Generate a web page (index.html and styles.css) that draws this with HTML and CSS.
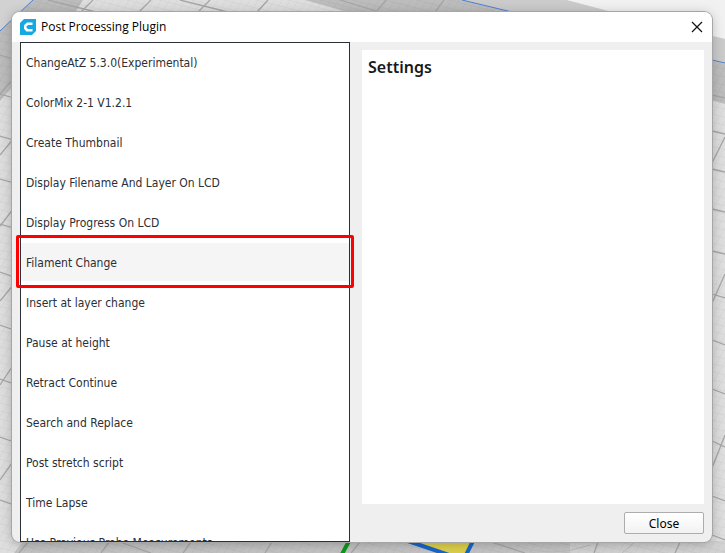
FILE: index.html
```html
<!DOCTYPE html>
<html lang="en">
  <head>
    <meta charset="UTF-8" />
    <meta name="viewport" content="width=device-width, initial-scale=1" />
    <title>Post Processing Plugin</title>
    <link rel="stylesheet" href="styles.css">
  </head>
  <body>
    <!-- Build plate behind the dialog -->
    <svg class="scene" viewBox="0 0 725 553" preserveAspectRatio="xMidYMid slice" aria-hidden="true">
      <defs>
        <pattern id="fine" width="7" height="7" patternUnits="userSpaceOnUse" patternTransform="matrix(1 .25 -.6 1 0 0)">
          <path d="M0 0H7M0 0V7" fill="none" stroke="#000" stroke-opacity=".05" />
        </pattern>
      </defs>
      <path fill="#dedede" d="M0 0H725V553H0z" />
      <path fill="#d2d2d2" d="M0 0H33L0 31z" />
      <path fill="#bcbcbc" d="M33 0H83L68 24 0 101V31z" />
      <path fill="#bdbdbd" d="M305 0H462L512 12H725V104L600 70 354 14z" />
      <path fill="#cbcbcb" d="M462 0H567L725 39V64L512 12z" />
      <path fill="#f1f1f1" d="M567 0H725V39L612 12z" />
      <path fill="#c4c4c4" d="M24 541H725V553H14z" />
      <path fill="#d2d2d2" d="M570 541H725V553H570z" />
      <path fill="url(#fine)" d="M33 0H462L725 64V553H0V31z" />
      <g fill="none" stroke="#a6a6a6" stroke-width="1.3">
        <path d="M48 0L96 12M180 0L228 12M340 0L376 11M0 55L14 59M0 94L14 98M0 136L14 140M0 179L14 183M0 224L14 228M0 272L14 277M0 325L14 330M0 379L14 384M0 437L14 442M0 500L14 505" />
        <path d="M93 0L81 12M151 0L139 12M210 0L198 12M268 0L257 12M386 0L376 12M444 0L435 12M14 78L0 94M14 138L0 155M14 208L0 226M14 284L0 301M14 364L0 385M14 460L0 480" />
        <path d="M712 95L725 98M712 131L725 134M712 169L725 172M712 209L725 212M712 251L725 254M712 294L725 298M712 340L725 345M712 389L725 394M712 441L725 447M712 496L725 501M725 137L712 163M725 274L712 303M725 435L712 468" />
        <path d="M28 542L19 553M109 542L101 553M191 542L183 553M272 542L265 553M120 542L151 553M360 542L351 553M491 542L525 553M598 542L594 553M680 542L675 553M712 535L725 540" />
        <path stroke="#bbb" stroke-width="1" d="M515 545Q550 559 590 545M635 542L622 553" />
      </g>
      <path fill="none" stroke="#4a80d0" d="M33 0L0 31M462 0L512 12M712 60L725 63" />
      <path fill="#ddcf4c" stroke="#1766c9" stroke-width="4" d="M396 537L455 557H465L475 537z" />
      <path stroke="#0a9a18" stroke-width="4" d="M349 541L341 556" />
    </svg>

    <main class="dialog" role="dialog" aria-labelledby="title">
      <header class="titlebar">
        <svg class="logo" viewBox="0 0 16 16" aria-hidden="true">
          <path fill="#14a9e1" d="M4 0H16V12L12 16H0V4z" />
          <path fill="none" stroke="#fff" stroke-width="2.6" d="M12.500 4.800H7.500L5.300 6.800V9.200L7 11.200H12.500" />
        </svg>
        <h1 id="title" class="title">Post Processing Plugin</h1>
        <button class="dismiss" aria-label="Close window">
          <svg viewBox="0 0 10 10" aria-hidden="true">
            <path fill="none" stroke="#111" stroke-width="1.2" d="M0 0L10 10M10 0L0 10" />
          </svg>
        </button>
      </header>

      <div class="content">
        <div class="scripts">
          <ul class="script-list">
            <li><button class="script">ChangeAtZ 5.3.0(Experimental)</button></li>
            <li><button class="script">ColorMix 2-1 V1.2.1</button></li>
            <li><button class="script">Create Thumbnail</button></li>
            <li><button class="script">Display Filename And Layer On LCD</button></li>
            <li><button class="script">Display Progress On LCD</button></li>
            <li><button class="script active">Filament Change</button></li>
            <li><button class="script">Insert at layer change</button></li>
            <li><button class="script">Pause at height</button></li>
            <li><button class="script">Retract Continue</button></li>
            <li><button class="script">Search and Replace</button></li>
            <li><button class="script">Post stretch script</button></li>
            <li><button class="script">Time Lapse</button></li>
            <li><button class="script">Use Previous Probe Measurements</button></li>
          </ul>
          <div class="marker"></div>
        </div>

        <div class="side">
          <section class="settings">
            <h2 class="settings-title">Settings</h2>
          </section>
          <button class="close">Close</button>
        </div>
      </div>
    </main>
  </body>
</html>
```

FILE: styles.css
```css
* {
  box-sizing: border-box;
}

body {
  height: 100vh;
  margin: 0;
  padding: 12px 13px 11px 12px;
  overflow: hidden;
  font: 12px/16px "Noto Sans", "Open Sans", sans-serif;
  color: #2b2f36;
}

button {
  padding: 0;
  border: 0;
  background: none;
  font: inherit;
  color: inherit;
}

.scene {
  position: absolute;
  inset: 0;
  z-index: -1;
  width: 100%;
  height: 100%;
}

.dialog {
  display: flex;
  flex-direction: column;
  height: 100%;
  background: #efefef;
  border-radius: 8px;
  box-shadow: 0 0 0 1px #a6a6a6, 0 2px 12px rgba(0, 0, 0, 0.25);
}

.titlebar {
  display: flex;
  align-items: center;
  gap: 5px;
  height: 30px;
  padding: 0 10px 0 8px;
  background: #fff;
  border-radius: 8px 8px 0 0;
}

.logo {
  width: 16px;
  height: 16px;
}

.title {
  flex: 1;
  margin: 0;
  font: 12px/16px "Open Sans", "Noto Sans", sans-serif;
  color: #000;
}

.dismiss svg {
  display: block;
  width: 10px;
  height: 10px;
  overflow: visible;
}

.content {
  display: grid;
  grid-template-columns: 330fr 342fr;
  gap: 12px;
  flex: 1;
  min-height: 0;
  padding: 0 8px;
}

.scripts {
  position: relative;
  min-height: 0;
}

.script-list {
  height: 100%;
  margin: 0;
  padding: 0;
  overflow: hidden;
  list-style: none;
  background: #fff;
  border: 1px solid #2b2f36;
}

.script {
  display: block;
  width: 100%;
  height: 38px;
  margin-bottom: 2px;
  padding: 2px 5px 0;
  font: 12px/16px "DejaVu Sans Condensed", "Noto Sans", sans-serif;
  text-align: left;
}
.script.active {
  background: #f5f5f5;
}

/* Highlight around the active script */
.marker {
  position: absolute;
  top: 193px;
  left: -4px;
  right: -4px;
  height: 53px;
  border: 3px solid #f00;
  border-radius: 2px;
  pointer-events: none;
}

.side {
  display: flex;
  flex-direction: column;
  align-items: flex-end;
  gap: 8px;
  padding: 8px 0;
}

.settings {
  flex: 1;
  width: 100%;
  padding: 6px;
  background: #fff;
}

.settings-title {
  margin: 0;
  font-size: 16px;
  font-weight: 600;
  line-height: 22px;
  color: #191919;
}

.close {
  width: 80px;
  height: 22px;
  padding-top: 2px;
  background: linear-gradient(#fff, #f2f2f2);
  border: 1px solid #adadad;
  border-radius: 2px;
  color: #000;
}
```
